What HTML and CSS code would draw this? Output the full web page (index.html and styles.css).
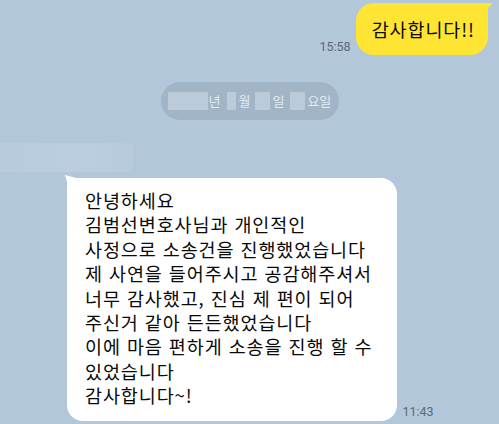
FILE: index.html
```html
<!DOCTYPE html>
<html lang="ko">
<head>
<meta charset="utf-8">
<link rel="stylesheet" href="styles.css">
</head>
<body>
<div class="chat">
  <div class="row-me">
    <span class="time">15:58</span>
    <div class="bubble-me">감사합니다!!</div>
  </div>
  <div class="date-row">
    <div class="date-pill">
      <span class="mask m1"></span><span class="dt">년</span>
      <span class="mask m2"></span><span class="dt">월</span>
      <span class="mask m3"></span><span class="dt">일</span>
      <span class="mask m4"></span><span class="dt">요일</span>
    </div>
  </div>
  <div class="name-blur"></div>
  <div class="row-other">
    <div class="bubble-other">안녕하세요<br>김범선변호사님과 개인적인<br>사정으로 소송건을 진행했었습니다<br>제 사연을 들어주시고 공감해주셔서<br>너무 감사했고, 진심 제 편이 되어<br>주신거 같아 든든했었습니다<br>이에 마음 편하게 소송을 진행 할 수<br>있었습니다<br>감사합니다~!</div>
    <span class="time">11:43</span>
  </div>
</div>
</body>
</html>
```
FILE: styles.css
```css
html, body {
  margin: 0;
  padding: 0;
}
body {
  width: 499px;
  height: 424px;
  overflow: hidden;
  background: #b2c7da;
  font-family: "Noto Sans CJK KR", "Noto Sans", sans-serif;
}
.chat {
  display: flex;
  flex-direction: column;
}
.row-me {
  display: flex;
  justify-content: flex-end;
  align-items: flex-end;
  gap: 5px;
  padding: 3px 11px 0 0;
}
.time {
  font-family: Roboto, "Noto Sans", sans-serif;
  font-size: 12.5px;
  line-height: 14px;
  color: #5b6a7a;
  padding-bottom: 1px;
}
.bubble-me {
  position: relative;
  height: 52px;
  display: flex;
  align-items: center;
  padding: 0 13px 0 16px;
  background: #fee533;
  border-radius: 18px 0 18px 18px;
  font-size: 18.5px;
  letter-spacing: 0.9px;
  color: #0a0a0a;
}
.bubble-me::after {
  content: "";
  position: absolute;
  top: 0;
  right: -5px;
  width: 10px;
  height: 10px;
  background: #fee533;
  clip-path: polygon(0 0, 100% 0, 0 100%);
}
.date-row {
  display: flex;
  justify-content: center;
  margin-top: 27px;
}
.date-pill {
  display: flex;
  align-items: center;
  height: 38px;
  width: 178px;
  box-sizing: border-box;
  padding: 0 0 0 7px;
  border-radius: 19px;
  background: #a2b5c7;
  font-size: 13px;
  color: #e3eaf1;
}
.mask {
  display: inline-block;
  height: 18px;
  background: #bccbd8;
}
.m1 { width: 40px; margin-right: 1px; }
.m2 { width: 9px; margin-left: 7px; margin-right: 2px; }
.m3 { width: 15px; margin-left: 5px; margin-right: 2px; }
.m4 { width: 15px; margin-left: 6px; margin-right: 2px; }
.dt {
  line-height: 18px;
}
.name-blur {
  width: 133px;
  height: 29px;
  margin-top: 23px;
  background: linear-gradient(90deg, #b7cbdd 0%, #bbcedf 60%, #b6cadc 100%);
}
.row-other {
  display: flex;
  align-items: flex-end;
  gap: 5px;
  margin-top: 6px;
  padding-left: 67px;
}
.bubble-other {
  position: relative;
  background: #fff;
  border-radius: 0 16px 16px 16px;
  padding: 10px 25px 13px 18px;
  font-size: 18.5px;
  line-height: 24.4px;
  letter-spacing: 0.9px;
  color: #0a0a0a;
  white-space: nowrap;
}
.bubble-other::before {
  content: "";
  position: absolute;
  top: -3px;
  left: -2px;
  width: 12px;
  height: 8px;
  background: #fff;
  clip-path: polygon(0 0, 100% 40%, 100% 100%, 20% 100%);
}
.row-other .time {
  padding-bottom: 2px;
}
```
